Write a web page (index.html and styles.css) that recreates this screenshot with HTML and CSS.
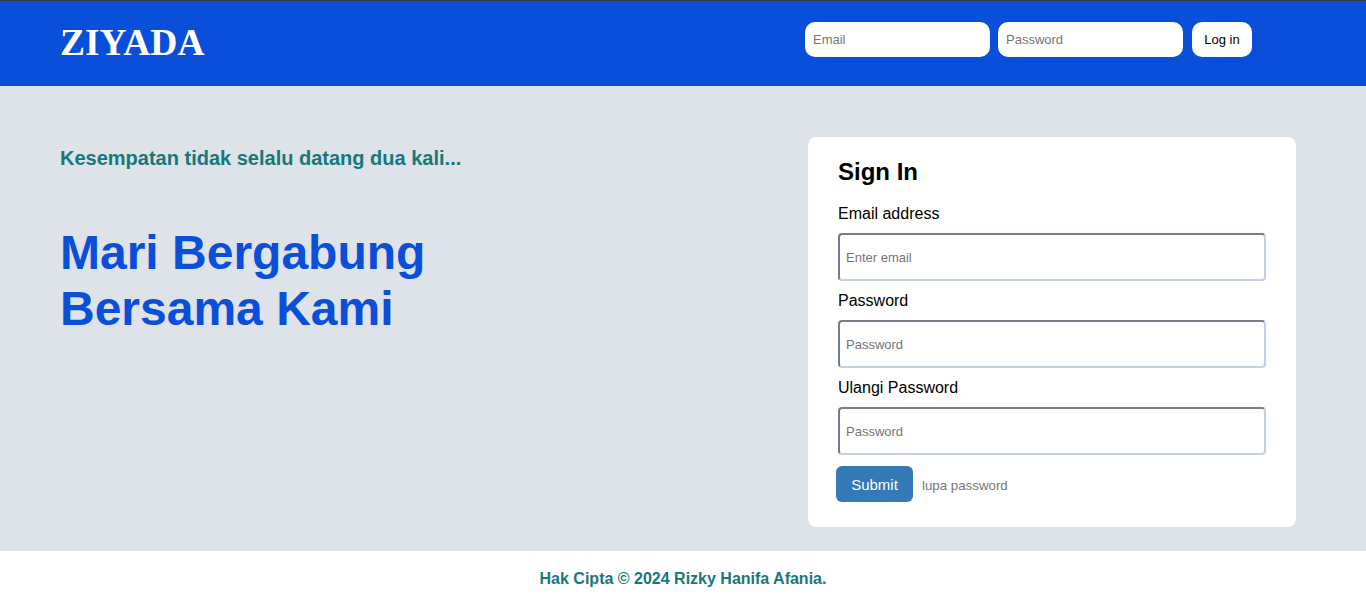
FILE: index.html
```html
<!DOCTYPE html>
<html lang="id">
<head>
<meta charset="utf-8">
<title>Ziyada</title>
<link rel="stylesheet" href="styles.css">
</head>
<body>
<header class="topbar">
  <div class="logo">ZIYADA</div>
  <form class="quick-login">
    <input class="quick-input" type="email" placeholder="Email">
    <input class="quick-input" type="password" placeholder="Password">
    <button class="quick-btn" type="button">Log in</button>
  </form>
</header>
<main class="hero">
  <section class="hero-text">
    <h4 class="tagline">Kesempatan tidak selalu datang dua kali...</h4>
    <h1 class="headline">Mari Bergabung<br>Bersama Kami</h1>
  </section>
  <section class="card">
    <h2 class="card-title">Sign In</h2>
    <label class="field-label">Email address</label>
    <input class="field-input" type="email" placeholder="Enter email">
    <label class="field-label">Password</label>
    <input class="field-input" type="password" placeholder="Password">
    <label class="field-label">Ulangi Password</label>
    <input class="field-input" type="password" placeholder="Password">
    <div class="actions">
      <button class="submit-btn" type="button">Submit</button>
      <a class="forgot" href="#">lupa password</a>
    </div>
  </section>
</main>
<footer class="footer">Hak Cipta © 2024 Rizky Hanifa Afania.</footer>
</body>
</html>
```
FILE: styles.css
```css
* { box-sizing: border-box; }
html, body { margin: 0; padding: 0; }
body {
  font-family: "Liberation Sans", Arial, sans-serif;
  background: #ffffff;
  color: #000;
}

.topbar {
  height: 86px;
  background: #0a4fd9;
  border-top: 1px solid #353a44;
  display: flex;
  align-items: flex-start;
  justify-content: space-between;
  padding: 21px 114px 0 60px;
}
.logo {
  font-family: "Liberation Serif", "Times New Roman", serif;
  font-weight: bold;
  font-size: 37.5px;
  line-height: 42px;
  color: #ffffff;
}
.quick-login {
  display: flex;
  gap: 8px;
  margin: 0;
}
.quick-input {
  width: 185px;
  height: 35px;
  border: none;
  border-radius: 10px;
  background: #fff;
  padding: 0 8px;
  font-family: "Liberation Sans", Arial, sans-serif;
  font-size: 13px;
  outline: none;
}
.quick-input::placeholder { color: #757575; }
.quick-btn {
  width: 60px;
  height: 35px;
  border: none;
  border-radius: 10px;
  background: #fff;
  color: #000;
  font-family: "Liberation Sans", Arial, sans-serif;
  font-size: 13px;
  margin-left: 1px;
  padding: 0;
}

.hero {
  height: 465px;
  background: #dee2e9;
  display: flex;
  align-items: flex-start;
  padding: 51px 70px 0 60px;
}
.hero-text {
  flex: 1;
  padding-top: 10px;
}
.tagline {
  margin: 0;
  font-size: 20px;
  line-height: 23px;
  font-weight: bold;
  color: #17787c;
}
.headline {
  margin: 55px 0 0;
  font-size: 48px;
  line-height: 56px;
  font-weight: bold;
  color: #0a4fd9;
}

.card {
  width: 488px;
  background: #ffffff;
  border-radius: 8px;
  padding: 20px 30px 25px;
  display: flex;
  flex-direction: column;
}
.card-title {
  margin: 0 0 16px;
  font-size: 24px;
  line-height: 29px;
  font-weight: bold;
}
.field-label {
  font-size: 16px;
  line-height: 24px;
  margin-bottom: 7px;
}
.field-input {
  width: 100%;
  height: 48px;
  border: 2px solid;
  border-color: #767e8c #c3d0e5 #c3d0e5 #767e8c;
  border-radius: 4px;
  padding: 0 6px;
  font-family: "Liberation Sans", Arial, sans-serif;
  font-size: 13px;
  margin-bottom: 8px;
  outline: none;
  background: #fff;
}
.field-input::placeholder { color: #757575; }
.actions {
  display: flex;
  align-items: center;
  gap: 9px;
  margin-top: 3px;
  margin-left: -2px;
}
.submit-btn {
  width: 77px;
  height: 36px;
  border: none;
  border-radius: 6px;
  background: #337ab7;
  color: #ffffff;
  font-family: "Liberation Sans", Arial, sans-serif;
  font-size: 15px;
  padding: 0;
}
.forgot {
  font-size: 13.3px;
  color: #777777;
  text-decoration: none;
  padding-top: 2px;
}

.footer {
  height: 53px;
  display: flex;
  align-items: center;
  justify-content: center;
  padding-top: 2px;
  font-size: 16px;
  font-weight: bold;
  color: #17787c;
}
```
